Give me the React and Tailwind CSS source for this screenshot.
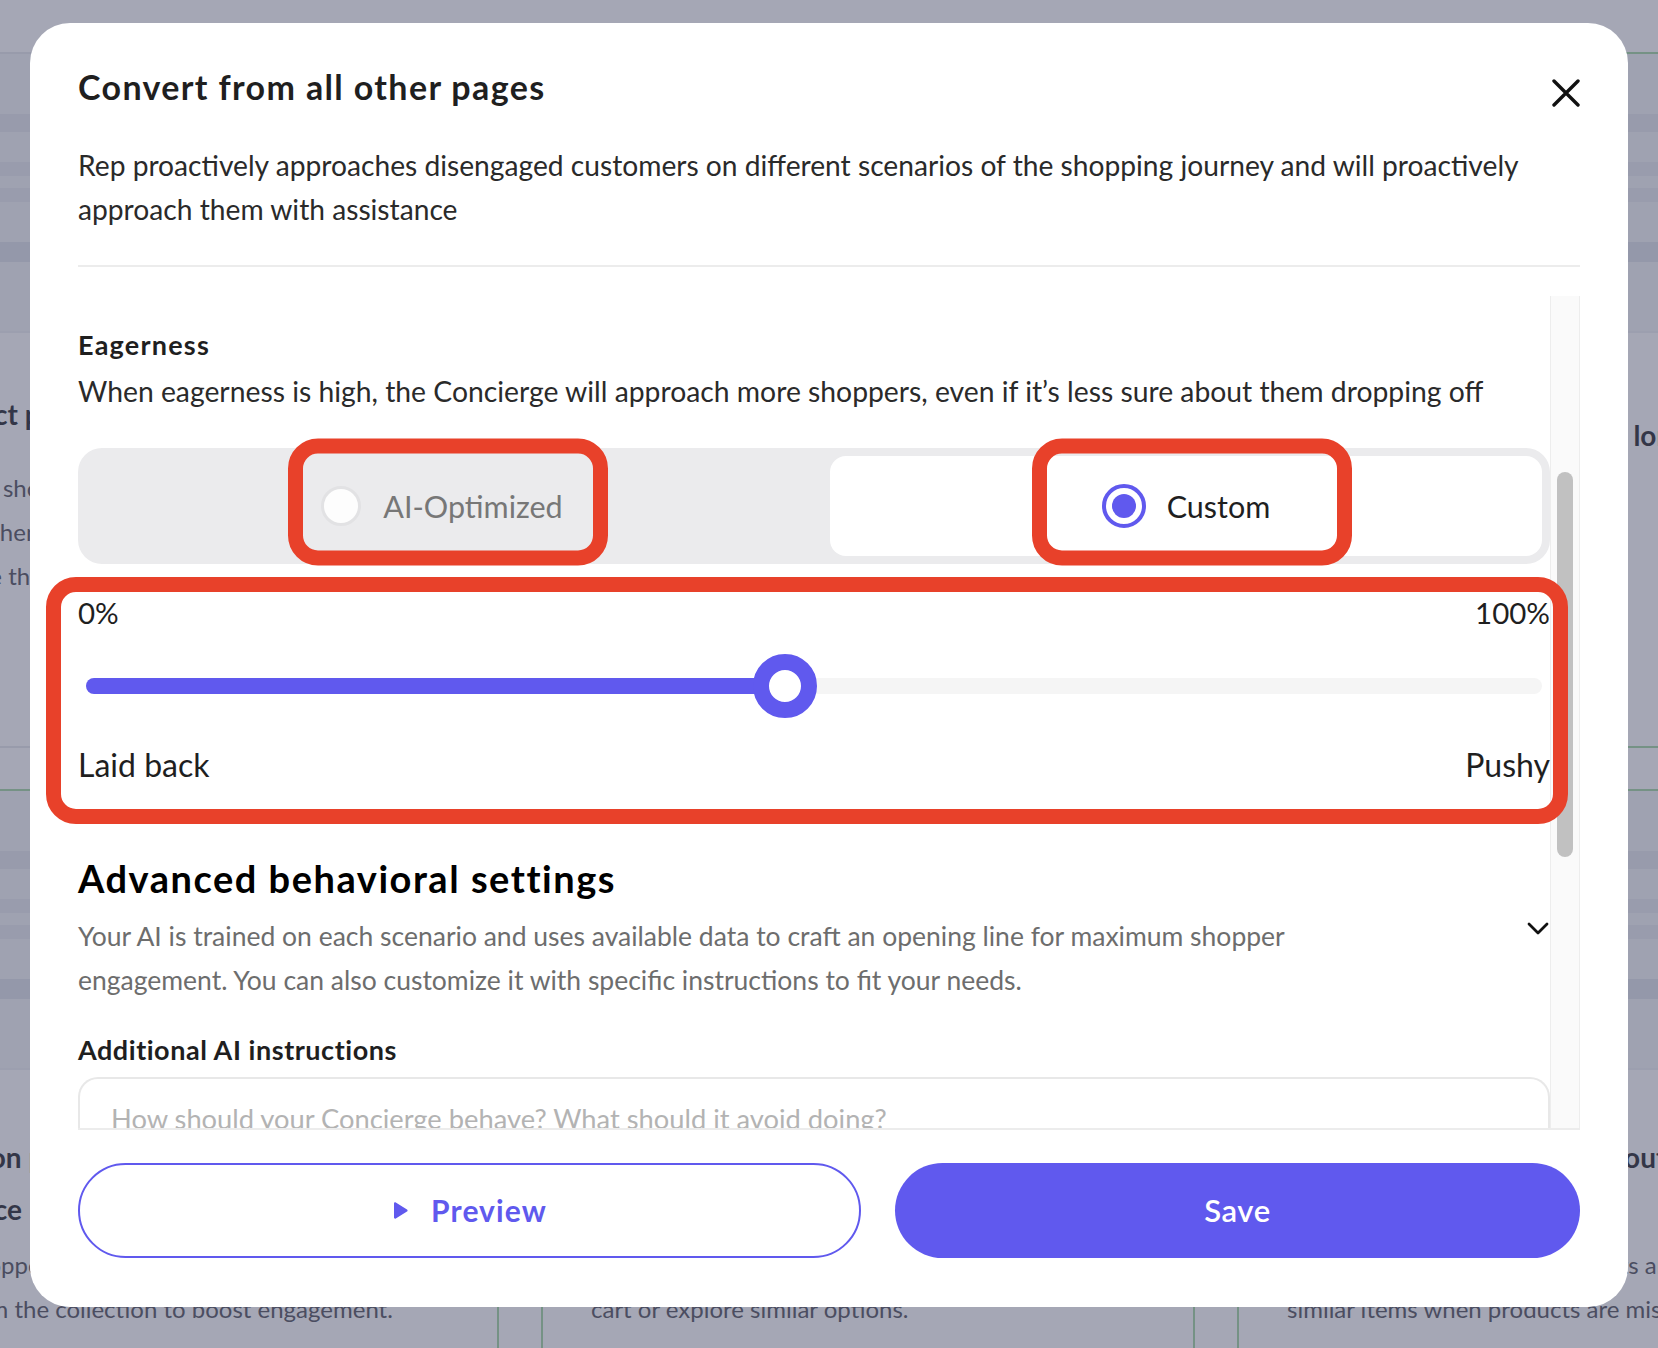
import React from 'react';

// --- Background page (dimmed behind the modal) ---
const cards = [
  [
    {
      title: 'A product page engagement',
      desc: 'Approach shoppers who linger on a product page and help them quickly find what they need before they leave the store for good.',
      border: 'border-[#e5e7eb]',
      pt: 'pt-[55px]',
      gap: 'mt-[26px]',
    },
    {
      title: 'Collection page engagement and navigation assistance',
      desc: 'Guide shoppers browsing a category and highlight items from the collection to boost engagement.',
      border: 'border-[#9fd49f]',
      pt: 'pt-[61px]',
      gap: 'mt-[8px]',
    },
  ],
  [
    {
      title: 'Cart abandonment recovery',
      desc: 'Reach out to shoppers leaving the cart and help them complete their order with confidence.',
      border: 'border-[#9fd49f]',
      pt: 'pt-[55px]',
      gap: 'mt-[26px]',
    },
    {
      title: 'Out of stock product alternatives for cart shoppers',
      desc: 'Offer shoppers a quick way to stay in the\ncart or explore similar options.',
      border: 'border-[#9fd49f]',
      pt: 'pt-[61px]',
      gap: 'mt-[8px]',
    },
  ],
  [
    {
      title: 'Returning shopper greeting long on checkout',
      desc: 'Greet returning visitors.',
      link: 'See more suggestions',
      border: 'border-[#9fd49f]',
      pt: 'pt-[76px]',
      gap: 'mt-[22px]',
    },
    {
      title: 'Search results recovery for out of stock offers',
      desc: 'Help shoppers who get no results and recommend similar items when products are missing.',
      border: 'border-[#9fd49f]',
      pt: 'pt-[61px]',
      gap: 'mt-[8px]',
    },
  ],
];

function BgCard({ card }) {
  return (
    <div className={`h-[696px] overflow-hidden rounded-[16px] border-2 bg-white ${card.border}`}>
      <div className="h-[279px] border-b-2 border-[#eceef2] bg-[#f3f4f7] px-[40px] pt-[60px]">
        <div className="flex h-[18px] items-center gap-[8px] bg-[#e4e6ec] px-[10px]">
          <span className="h-[6px] w-[6px] rounded-full bg-[#b9bcc6]" />
          <span className="h-[6px] w-[6px] rounded-full bg-[#b9bcc6]" />
          <span className="h-[6px] w-[6px] rounded-full bg-[#b9bcc6]" />
        </div>
        <div className="mt-[30px] h-[14px] w-[70%] rounded bg-[#e6e8ee]" />
        <div className="mt-[12px] h-[14px] w-[85%] rounded bg-[#e6e8ee]" />
        <div className="mt-[40px] h-[20px] w-full bg-[#dde0e8]" />
      </div>
      <div className={`px-[48px] ${card.pt}`}>
        <div className="text-[28px] font-bold leading-[52px] text-[#1b1c24]">{card.title}</div>
        <div className={`whitespace-pre-line text-[24px] leading-[44px] text-[#4a4b55] ${card.gap}`}>{card.desc}</div>
        {card.link && <div className="mt-[64px] text-[24px] font-bold leading-[32px] text-[#3b32d6]">{card.link}</div>}
      </div>
    </div>
  );
}

function BackgroundPage() {
  return (
    <div className="ml-[-155px] grid w-[2046px] grid-cols-3 gap-x-[42px] gap-y-[41px] pt-[52px]">
      {[0, 1].map((row) =>
        cards.map((col, ci) => <BgCard key={`${row}-${ci}`} card={col[row]} />)
      )}
    </div>
  );
}

// --- Modal pieces ---
function Callout({ className }) {
  return (
    <span
      className={`pointer-events-none absolute z-10 rounded-[30px] border-[15px] border-[#e8412a] ${className}`}
    />
  );
}

function OptionBox() {
  return (
    <Callout className="left-[calc(50%+6px)] top-[calc(50%-4px)] h-[127px] w-[320px] -translate-x-1/2 -translate-y-1/2" />
  );
}

function Scrollbar() {
  return (
    <div className="flex w-[30px] shrink-0 justify-center border-x border-[#ededed] bg-[#fafafa] pt-[176px]">
      <div className="h-[385px] w-[16px] rounded-full bg-[#c1c1c1]" />
    </div>
  );
}

const sliderValue = 48.04;

export default function App() {
  return (
    <div className="relative min-h-screen w-full overflow-hidden bg-white font-[Lato,sans-serif]">
      <BackgroundPage />
      <div className="fixed inset-0 bg-[rgba(75,79,107,0.5)]" />

      <div className="fixed inset-0 flex justify-center pt-[23px]">
        <div className="flex h-[1284px] w-[1598px] flex-col rounded-[40px] bg-white px-[48px] pb-[48px] pt-[44px]">
          {/* Header */}
          <div className="flex items-start justify-between">
            <h2 className="text-[34px] font-bold leading-[40px] tracking-[0.04em] text-[#1f1f1f]">Convert from all other pages</h2>
            <button className="mt-[12px]">
              <svg width="28" height="28" viewBox="0 0 28 28" fill="none" stroke="#111" strokeWidth="3.4" strokeLinecap="round">
                <path d="M2 2 26 26M26 2 2 26" />
              </svg>
            </button>
          </div>
          <p className="mt-[36px] max-w-[1480px] text-[28.2px] leading-[44px] text-[#2a2a2a]">
            Rep proactively approaches disengaged customers on different scenarios of the shopping journey and will proactively approach them with assistance
          </p>
          <div className="mt-[34px] h-[2px] bg-[#ececec]" />

          {/* Scrollable settings */}
          <div className="mt-[29px] flex h-[834px] border-b-2 border-[#ececec]">
            <div className="min-w-0 flex-1 pt-[33px]">
              <div className="text-[27px] font-bold leading-[32px] tracking-[0.045em] text-[#1f1f1f]">Eagerness</div>
              <div className="mt-[10px] text-[28.3px] leading-[40px] text-[#2a2a2a]">
                When eagerness is high, the Concierge will approach more shoppers, even if it’s less sure about them dropping off
              </div>

              {/* Segmented control */}
              <div className="mt-[37px] grid h-[116px] grid-cols-2 gap-[32px] rounded-[24px] bg-[#ebebed] p-2">
                <div className="flex items-center justify-center">
                  <div className="relative flex h-[44px] items-center gap-[22px]">
                    <span className="h-[40px] w-[40px] rounded-full border-[3px] border-[#e2e2e4] bg-[#fdfdfd]" />
                    <span className="text-[30.5px] leading-[44px] text-[#777]">AI-Optimized</span>
                    <OptionBox />
                  </div>
                </div>
                <div className="flex items-center justify-center rounded-[16px] bg-white">
                  <div className="relative flex h-[44px] items-center gap-[21px]">
                    <span className="flex h-[44px] w-[44px] items-center justify-center rounded-full border-[4px] border-[#6059ee]">
                      <span className="h-[24px] w-[24px] rounded-full bg-[#6059ee]" />
                    </span>
                    <span className="text-[30.5px] leading-[44px] text-[#1f1f1f]">Custom</span>
                    <OptionBox />
                  </div>
                </div>
              </div>

              {/* Slider */}
              <div className="relative mt-[33px]">
                <div className="flex justify-between text-[29.5px] leading-[32px] text-[#1f1f1f]">
                  <span>0%</span>
                  <span>100%</span>
                </div>
                <div className="mt-[25px] flex h-[64px] items-center px-2">
                  <div className="relative h-[16px] w-full rounded-full bg-[#f5f5f5]">
                    <div className="h-full rounded-full bg-[#6059ee]" style={{ width: `${sliderValue}%` }} />
                    <div
                      className="absolute top-1/2 h-[64px] w-[64px] -translate-x-1/2 -translate-y-1/2 rounded-full border-[16px] border-[#6059ee] bg-white"
                      style={{ left: `${sliderValue}%` }}
                    />
                  </div>
                </div>
                <div className="mt-[29px] flex justify-between text-[32px] leading-[36px] text-[#1f1f1f]">
                  <span>Laid back</span>
                  <span>Pushy</span>
                </div>
                <Callout className="-bottom-[41px] -left-[32px] -right-[18px] -top-[20px]" />
              </div>

              {/* Advanced */}
              <div className="mt-[73px] flex items-center justify-between">
                <div className="max-w-[1320px]">
                  <h3 className="text-[38px] font-bold leading-[44px] tracking-[0.04em] text-black">Advanced behavioral settings</h3>
                  <p className="mt-[14px] text-[26.5px] leading-[44px] text-[#6d6d6d]">
                    Your AI is trained on each scenario and uses available data to craft an opening line for maximum shopper engagement. You can also customize it with specific instructions to fit your needs.
                  </p>
                </div>
                <svg width="22" height="14" viewBox="0 0 22 14" fill="none" stroke="#111" strokeWidth="2.8" strokeLinecap="round" strokeLinejoin="round" className="mr-[1px]">
                  <path d="M2 2l9 9 9-9" />
                </svg>
              </div>

              <div className="mt-[32px] text-[27px] font-bold leading-[32px] tracking-[0.02em] text-[#1f1f1f]">Additional AI instructions</div>
              <div className="mt-[11px] h-[51px] overflow-hidden whitespace-nowrap rounded-t-[20px] border-2 border-b-0 border-[#e8e8e8] pl-[31px] pt-[22px] text-[27.3px] leading-[36px] text-[#b3b3b3]">
                How should your Concierge behave? What should it avoid doing?
              </div>
            </div>
            <Scrollbar />
          </div>

          {/* Footer buttons */}
          <div className="mt-[33px] flex gap-[34px]">
            <button className="flex h-[95px] w-[783px] items-center justify-center gap-[23px] rounded-full border-2 border-[#6059ee] bg-white text-[30px] font-bold tracking-[0.037em] text-[#6059ee]">
              <svg width="16" height="17" viewBox="0 0 16 17" fill="#6059ee">
                <path d="M2 1.5c0-1 1-1.5 1.8-1L15 7.4c.8.5.8 1.7 0 2.2L3.8 16.5c-.8.5-1.8 0-1.8-1z" />
              </svg>
              Preview
            </button>
            <button className="h-[95px] flex-1 rounded-full bg-[#6059ee] text-[31px] font-semibold tracking-[0.02em] text-white">Save</button>
          </div>
        </div>
      </div>
    </div>
  );
}
